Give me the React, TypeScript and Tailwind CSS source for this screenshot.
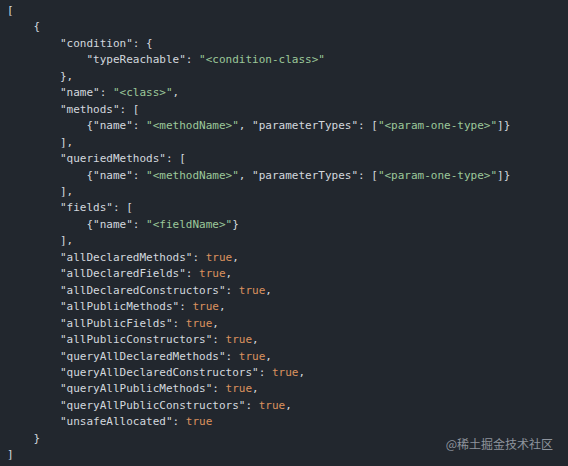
import React from "react";

type Tok = [string, "p" | "s" | "b"];

const lines: Tok[][] = [
  [["[", "p"]],
  [["    {", "p"]],
  [['        "condition": {', "p"]],
  [['            "typeReachable": ', "p"], ['"<condition-class>"', "s"]],
  [["        },", "p"]],
  [['        "name": ', "p"], ['"<class>"', "s"], [",", "p"]],
  [['        "methods": [', "p"]],
  [['            {"name": ', "p"], ['"<methodName>"', "s"], [', "parameterTypes": [', "p"], ['"<param-one-type>"', "s"], ["]}", "p"]],
  [["        ],", "p"]],
  [['        "queriedMethods": [', "p"]],
  [['            {"name": ', "p"], ['"<methodName>"', "s"], [', "parameterTypes": [', "p"], ['"<param-one-type>"', "s"], ["]}", "p"]],
  [["        ],", "p"]],
  [['        "fields": [', "p"]],
  [['            {"name": ', "p"], ['"<fieldName>"', "s"], ["}", "p"]],
  [["        ],", "p"]],
  [['        "allDeclaredMethods": ', "p"], ["true", "b"], [",", "p"]],
  [['        "allDeclaredFields": ', "p"], ["true", "b"], [",", "p"]],
  [['        "allDeclaredConstructors": ', "p"], ["true", "b"], [",", "p"]],
  [['        "allPublicMethods": ', "p"], ["true", "b"], [",", "p"]],
  [['        "allPublicFields": ', "p"], ["true", "b"], [",", "p"]],
  [['        "allPublicConstructors": ', "p"], ["true", "b"], [",", "p"]],
  [['        "queryAllDeclaredMethods": ', "p"], ["true", "b"], [",", "p"]],
  [['        "queryAllDeclaredConstructors": ', "p"], ["true", "b"], [",", "p"]],
  [['        "queryAllPublicMethods": ', "p"], ["true", "b"], [",", "p"]],
  [['        "queryAllPublicConstructors": ', "p"], ["true", "b"], [",", "p"]],
  [['        "unsafeAllocated": ', "p"], ["true", "b"]],
  [["    }", "p"]],
  [["]", "p"]],
];

const tone = {
  p: "text-[#d3d8de]",
  s: "text-[#9cc79a]",
  b: "text-[#dc925e]",
};

export default function App() {
  return (
    <div className="w-[568px] h-[466px] bg-[#22272e] overflow-hidden flex flex-col">
      <pre className="pl-[7px] pt-[3px] font-['DejaVu_Sans_Mono',monospace] text-[11px] leading-[16.45px] whitespace-pre">
        {lines.map((line, i) => (
          <div key={i}>
            {line.map(([text, kind], j) => (
              <span key={j} className={tone[kind]}>
                {text}
              </span>
            ))}
          </div>
        ))}
      </pre>
      <div className="flex justify-end pr-[15px] -mt-[28px]">
        <span className="font-['Noto_Sans_CJK_SC',sans-serif] text-[12px] leading-[16px] text-[#8e949d]">
          @稀土掘金技术社区
        </span>
      </div>
    </div>
  );
}
